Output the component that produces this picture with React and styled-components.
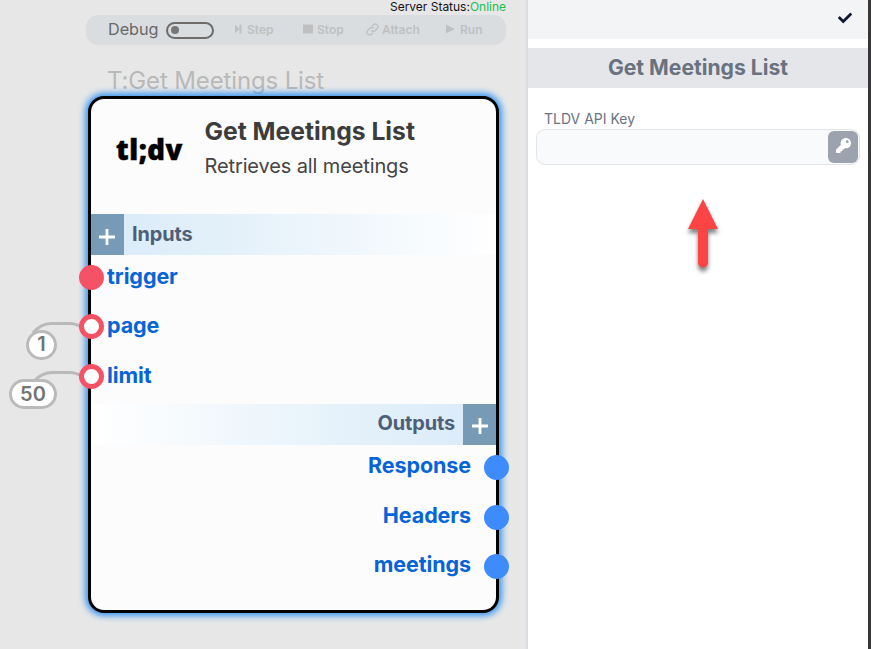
import React from "react";
import styled, { createGlobalStyle } from "styled-components";
import { FaCheck, FaKey } from "react-icons/fa";

const GlobalStyle = createGlobalStyle`
  *, *::before, *::after { box-sizing: border-box; }
  body { margin: 0; overflow: hidden; font-family: Inter, "Liberation Sans", sans-serif; }
`;

const Screen = styled.div`
  display: flex;
  width: 871px;
  height: 649px;
  background: #fff;
`;

const Canvas = styled.main`
  position: relative;
  width: 528px;
  height: 100%;
  overflow: hidden;
  background: #e7e7e7;
  border-right: 2px solid #d9dde2;
`;

const ServerStatus = styled.div`
  height: 15px;
  padding-right: 20px;
  text-align: right;
  font-size: 12px;
  line-height: 14px;
  letter-spacing: -0.01px;
  color: #111;
  span { color: #22c04a; }
`;

const DebugBar = styled.div`
  display: flex;
  align-items: center;
  width: 420px;
  height: 30px;
  margin-left: 86px;
  padding-left: 22px;
  border-radius: 12px;
  background: #d9dde0;
`;

const DebugLabel = styled.span`
  width: 58px;
  font-size: 16.2px;
  line-height: 28px;
  margin-top: -2px;
  color: #686868;
`;

const Toggle = styled.span`
  display: flex;
  align-items: center;
  width: 48px;
  height: 17px;
  margin-right: 20px;
  padding-left: 3px;
  border: 2px solid #6f6c6c;
  border-radius: 9px;
  &::before {
    content: "";
    width: 8px;
    height: 8px;
    border-radius: 50%;
    background: #777;
  }
`;

const DebugAction = styled.span`
  display: flex;
  align-items: center;
  gap: ${(p) => p.$gap}px;
  width: ${(p) => p.$width}px;
  margin-top: -1px;
  font-size: 12px;
  font-weight: 600;
  color: #bfc0c1;
  svg { flex: none; margin-top: -1px; }
`;

const NodeCaption = styled.div`
  margin: 21px 0 0 107px;
  font-size: 24px;
  letter-spacing: -0.14px;
  line-height: 30px;
  color: #b9b9b9;
`;

const Node = styled.section`
  position: absolute;
  left: 88px;
  top: 96px;
  width: 411px;
  height: 517px;
  border: 3px solid #000;
  border-radius: 16px;
  background: #fcfcfc;
  box-shadow: 0 0 6px 3px #3b97f0;
`;

const NodeHeader = styled.header`
  display: flex;
  height: 115px;
  padding: 16px 0 0 25px;
`;

const Logo = styled.div`
  width: 88.5px;
  padding-top: 17px;
  font-family: "Noto Sans", "Open Sans", sans-serif;
  font-size: 27.5px;
  font-weight: 900;
  line-height: 36px;
  letter-spacing: 0.55px;
  color: #000;
  -webkit-text-stroke: 0.5px #000;
`;

const NodeTitle = styled.h1`
  margin: 0;
  font-size: 24.7px;
  font-weight: 700;
  line-height: 32px;
  color: #3c3c3c;
`;

const NodeDescription = styled.p`
  margin: 4px 0 0;
  font-size: 20px;
  letter-spacing: -0.12px;
  line-height: 30px;
  color: #444;
`;

const SectionBar = styled.div`
  display: flex;
  flex-direction: ${(p) => (p.$end ? "row-reverse" : "row")};
  height: 41px;
  background: linear-gradient(${(p) => (p.$end ? "to left" : "to right")}, #d9eaf8, #e4f1fa 35%, #fff);
`;

const SectionLabel = styled.span`
  padding: 0 8px;
  font-size: 19.9px;
  font-weight: 700;
  letter-spacing: -0.1px;
  line-height: ${(p) => (p.$end ? 39 : 40)}px;
  color: #4d6078;
`;

const AddButton = styled.button`
  display: flex;
  align-items: center;
  justify-content: center;
  width: 33px;
  height: 41px;
  padding: ${(p) => (p.$end ? "3px 0 0" : "4px 1px 0 0")};
  border: 0;
  background: #779bb7;
`;

const PortList = styled.div`
  height: ${(p) => p.$height}px;
`;

const PortRow = styled.div`
  position: relative;
  display: flex;
  justify-content: ${(p) => (p.$end ? "flex-end" : "flex-start")};
  height: ${(p) => (p.$end ? 49.5 : 49.4)}px;
  padding: 0 ${(p) => (p.$end ? 25 : 16)}px;
  font-size: 21.5px;
  font-weight: 700;
  letter-spacing: -0.08px;
  line-height: ${(p) => (p.$end ? 41 : 42)}px;
  color: #0664d8;
`;

const Port = styled.i`
  position: absolute;
  top: 10px;
  ${(p) => (p.$end ? "right: -13px;" : "left: -12px;")}
  width: 25px;
  height: 25px;
  border: 5px solid ${(p) => (p.$end ? "#3e8bfb" : "#f65265")};
  border-radius: 50%;
  background: ${(p) => (p.$end ? "#3e8bfb" : p.$open ? "#fff" : "#f65265")};
`;

const Wires = styled.svg`
  position: absolute;
  left: 0;
  top: 310px;
`;

const Constant = styled.div`
  position: absolute;
  left: ${(p) => p.$x}px;
  top: ${(p) => p.$y}px;
  width: ${(p) => p.$width}px;
  height: 30px;
  border: 3px solid #bababa;
  border-radius: 15px;
  background: #fff;
  color: #747474;
  font-size: 20px;
  font-weight: 600;
  line-height: ${(p) => p.$line}px;
  text-align: center;
`;

const Panel = styled.aside`
  width: 340px;
`;

const PanelToolbar = styled.div`
  display: flex;
  justify-content: flex-end;
  height: 39px;
  padding: 11px 16px 0 0;
  background: #f3f4f6;
  color: #111a30;
`;

const PanelTitle = styled.h2`
  height: 40px;
  margin: 9px 0 0;
  background: #e5e6ea;
  color: #69727f;
  font-size: 21.15px;
  font-weight: 700;
  line-height: 40px;
  text-align: center;
`;

const Field = styled.div`
  padding: 21px 8px 0;
`;

const FieldLabel = styled.span`
  display: block;
  height: 20px;
  padding-left: 8px;
  font-size: 14px;
  line-height: 20px;
  color: #6b7280;
`;

const KeyInput = styled.div`
  display: flex;
  justify-content: flex-end;
  height: 36px;
  padding: 1px;
  border: 1px solid #e3e5e9;
  border-radius: 9px;
  background: #f9fafc;
`;

const KeyButton = styled.button`
  display: flex;
  justify-content: center;
  width: 30px;
  height: 32px;
  padding: 7px 0 0;
  border: 0;
  border-radius: 6px;
  background: #9ca3af;
  color: #fff;
`;

const Arrow = styled.svg`
  display: block;
  margin: 32px 0 0 160px;
  overflow: visible;
  filter: drop-shadow(0 4px 2px rgba(0, 0, 0, 0.5));
`;

const WindowEdge = styled.div`
  width: 3px;
  background: #373737;
`;

const Plus = () => (
  <svg width="16" height="16" viewBox="0 0 16 16" stroke="#fff" strokeWidth="2.8">
    <path d="M8 0v16M0 8h16" />
  </svg>
);

const inputs = [
  { name: "trigger", open: false },
  { name: "page", open: true },
  { name: "limit", open: true },
];
const outputs = ["Response", "Headers", "meetings"];

export default function App() {
  return (
    <Screen>
      <GlobalStyle />
      <Canvas>
        <ServerStatus>Server Status:<span>Online</span></ServerStatus>
        <DebugBar>
          <DebugLabel>Debug</DebugLabel>
          <Toggle />
          <DebugAction $width={69} $gap={5}>
            <svg width="8" height="10" viewBox="0 0 8 10" fill="currentColor"><path d="M1 .5L5.500 5 1 9.500zM5.500 .5h2v9h-2z" /></svg>
            Step
          </DebugAction>
          <DebugAction $width={63} $gap={4}>
            <svg width="10" height="10"><rect width="10" height="9" y=".5" fill="currentColor" /></svg>
            Stop
          </DebugAction>
          <DebugAction $width={80} $gap={3}>
            <svg width="13" height="13" viewBox="0 0 24 24" fill="none" stroke="currentColor" strokeWidth="2.6">
              <path d="M10 14a5 5 0 0 0 7 0l4-4a5 5 0 0 0-7-7l-3 3M14 10a5 5 0 0 0-7 0l-4 4a5 5 0 0 0 7 7l3-3" />
            </svg>
            Attach
          </DebugAction>
          <DebugAction $width={50} $gap={5}>
            <svg width="9" height="10"><path d="M0 .5L9 5 0 9.5z" fill="currentColor" /></svg>
            Run
          </DebugAction>
        </DebugBar>
        <NodeCaption>T:Get Meetings List</NodeCaption>
        <Wires width="100" height="80" fill="none" stroke="#bababa" strokeWidth="3">
          <path d="M33 23C38 17 43 13.5 51 13.5H70C75 13.5 78 15 82 17" />
          <path d="M34 71C39 66 44 62.5 52 62.5H70C75 62.5 78 64 82 66" />
        </Wires>
        <Constant $x={26} $y={330} $width={31} $line={23}>1</Constant>
        <Constant $x={9} $y={379} $width={48} $line={24}>50</Constant>
        <Node>
          <NodeHeader>
            <Logo>tl;dv</Logo>
            <div>
              <NodeTitle>Get Meetings List</NodeTitle>
              <NodeDescription>Retrieves all meetings</NodeDescription>
            </div>
          </NodeHeader>
          <SectionBar>
            <AddButton aria-label="Add input"><Plus /></AddButton>
            <SectionLabel>Inputs</SectionLabel>
          </SectionBar>
          <PortList $height={149}>
            {inputs.map((port) => (
              <PortRow key={port.name}><Port $open={port.open} />{port.name}</PortRow>
            ))}
          </PortList>
          <SectionBar $end>
            <AddButton $end aria-label="Add output"><Plus /></AddButton>
            <SectionLabel $end>Outputs</SectionLabel>
          </SectionBar>
          <PortList $height={165}>
            {outputs.map((name) => (
              <PortRow key={name} $end>{name}<Port $end /></PortRow>
            ))}
          </PortList>
        </Node>
      </Canvas>
      <Panel>
        <PanelToolbar><FaCheck size={14} /></PanelToolbar>
        <PanelTitle>Get Meetings List</PanelTitle>
        <Field>
          <FieldLabel>TLDV API Key</FieldLabel>
          <KeyInput>
            <KeyButton aria-label="Choose key"><FaKey size={15} /></KeyButton>
          </KeyInput>
        </Field>
        <Arrow width="30" height="74" viewBox="0 0 30 74" fill="#fd4444">
          <path d="M15 2L30 32H20V65.500a5 5 0 0 1-10 0V32H0z" />
        </Arrow>
      </Panel>
      <WindowEdge />
    </Screen>
  );
}
